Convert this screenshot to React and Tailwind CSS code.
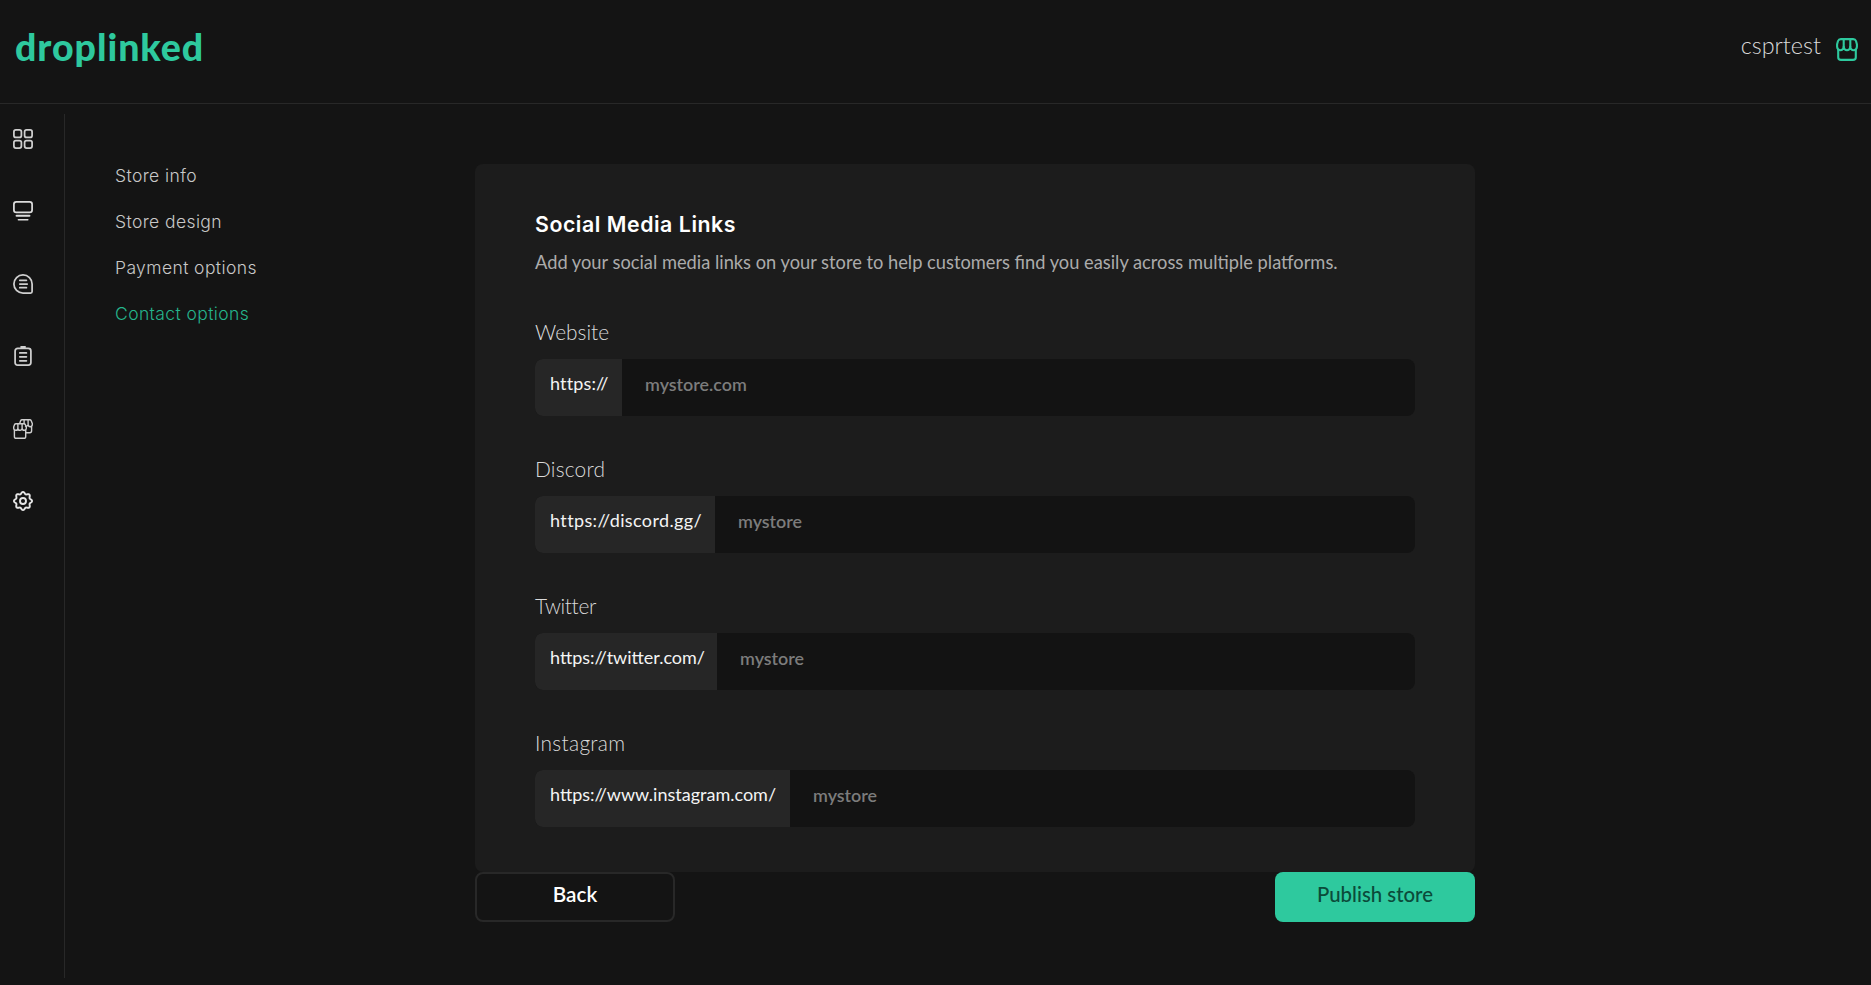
function Market({ className, strokeWidth = 2.1 }) {
  return (
    <svg viewBox="0 0 22 23" className={className} fill="none" stroke="currentColor" strokeWidth={strokeWidth} strokeLinecap="round" strokeLinejoin="round">
      <path d="M1.1 8.8V6.2L2 3Q2.7 1.1 4.8 1.1h12.4Q19.3 1.1 20 3l.9 3.2v2.6a3.3 3.4 0 0 1-6.6 0 3.3 3.4 0 0 1-6.6 0A3.3 3.4 0 0 1 1.1 8.8Z" />
      <path d="M7.7 1.1v7.7M14.3 1.1v7.7M2.2 11.6v7.6Q2.2 21.9 5 21.9h12q2.8 0 2.8-2.7v-7.6" />
    </svg>
  );
}

const gearPath =
  Array.from({ length: 97 }, (_, i) => {
    const a = (i / 96) * Math.PI * 2;
    const r = 8.1 + 0.95 * Math.cos(8 * a);
    return `${i ? 'L' : 'M'}${(10 + r * Math.sin(a)).toFixed(2)} ${(10 - r * Math.cos(a)).toFixed(2)}`;
  }).join('') + 'Z';

const iconProps = {
  viewBox: '0 0 20 20',
  className: 'h-5 w-5',
  fill: 'none',
  stroke: 'currentColor',
  strokeLinecap: 'round',
  strokeLinejoin: 'round',
};

function SideIcons() {
  return (
    <div className="flex flex-col gap-[52.4px] pl-[13px] pt-[25px] text-[#cfcfcf]">
      <svg {...iconProps} strokeWidth="1.75">
        <rect x="0.9" y="0.9" width="7.5" height="7.5" rx="2" />
        <rect x="11.6" y="0.9" width="7.5" height="7.5" rx="2" />
        <rect x="0.9" y="11.6" width="7.5" height="7.5" rx="2" />
        <rect x="11.6" y="11.6" width="7.5" height="7.5" rx="2" />
      </svg>
      <svg {...iconProps} strokeWidth="1.75" className="h-5 w-5 text-[#dcdcdc]">
        <rect x="0.9" y="0.9" width="18.2" height="10.4" rx="2.4" />
        <path d="M3.6 14.8h12.8" strokeWidth="2.1" />
        <path d="M5.4 18.7h9.4" strokeWidth="1.6" />
      </svg>
      <svg {...iconProps} strokeWidth="1.75">
        <path d="M10 0.9A9.1 9.1 0 0 1 19.1 10v7.6q0 1.5-1.5 1.5H10A9.1 9.1 0 0 1 10 0.9Z" />
        <path d="M6.8 6.3h6.6M6.8 10h7.4M6.8 13.7h6.6" />
      </svg>
      <svg {...iconProps} strokeWidth="1.75">
        <rect x="2.1" y="2.3" width="15.8" height="16.8" rx="2.6" />
        <path d="M8.2 1h3.8" strokeWidth="2" />
        <path d="M6.8 6.9h6.6M6.8 10.8h6.6M6.8 14.8h6.6" />
      </svg>
      <svg {...iconProps} strokeWidth="1.4">
        <path d="M0.7 9.2V8l.8-2.3q.4-1 1.5-1h7.9q1.1 0 1.5 1L13.3 8v1.2a2.1 2.1 0 0 1-4.2 0 2.1 2.1 0 0 1-4.2 0 2.1 2.1 0 0 1-4.2 0ZM4.9 4.7v4.5M9.1 4.7v4.5" />
        <path d="M1.4 11.2v6.2q0 1.9 1.9 1.9h7.5q1.9 0 1.9-1.9v-6.2" />
        <path d="M6.7 4.5l.9-2.8q.4-1 1.5-1h7.6q1.1 0 1.5 1l1.1 2.7v1.2a2.1 2.1 0 0 1-4.2 0 2.1 2.1 0 0 1-2.6 1.5M11.1.7v3.8M15.1.7v4.9M18.6 7.6v4.2q0 1.9-1.9 1.9h-3.5" />
      </svg>
      <svg {...iconProps} strokeWidth="1.9" className="h-5 w-5 text-[#e6e6e6]">
        <path d={gearPath} />
        <circle cx="10" cy="10" r="3" />
      </svg>
    </div>
  );
}

function Field({ label, labelClass = '', prefix, prefixClass, placeholder }) {
  return (
    <div className="flex flex-col gap-[15px]">
      <label className={`pt-px text-[20.9px] font-light leading-6 text-[#dadada] ${labelClass}`}>{label}</label>
      <div className="flex h-[57px] overflow-hidden rounded-lg bg-[#131313]">
        <div className={`flex shrink-0 items-center bg-[#262626] pb-[9px] pl-[15px] text-[18px] leading-6 text-[#f4f4f4] ${prefixClass}`}>{prefix}</div>
        <input
          className="min-w-0 flex-1 bg-transparent pb-[7px] pl-[23px] text-[17.9px] font-semibold leading-6 text-white outline-none placeholder:text-[#7c7c7c] placeholder:opacity-100"
          placeholder={placeholder}
        />
      </div>
    </div>
  );
}

export default function App() {
  return (
    <div className="flex h-screen flex-col overflow-hidden bg-[#141414] font-['Lato',sans-serif] text-white">
      <header className="flex h-[104px] shrink-0 items-start justify-between border-b border-[#282828] pl-[15px] pr-[13px]">
        <div className="pt-[25px] text-[37.5px] font-black leading-[44px] tracking-[0.95px] text-[#2ec99e]">droplinked</div>
        <div className="flex items-start gap-[15px]">
          <span className="pt-[29px] text-[23.4px] font-light leading-8 text-[#dadada]">csprtest</span>
          <Market className="mt-[38px] h-[23px] w-[22px] text-[#2ec99e]" />
        </div>
      </header>
      <div className="flex min-h-0 flex-1">
        <aside className="flex w-[65px] shrink-0 flex-col">
          <div className="mb-[7px] mt-2.5 flex-1 border-r border-[#282828]">
            <div className="-mt-2.5">
              <SideIcons />
            </div>
          </div>
        </aside>
        <nav className="flex w-[410px] shrink-0 flex-col pl-[50px] pt-[49px] font-['Inter',sans-serif] text-[17.5px] font-light leading-[46px] tracking-[0.4px] text-[#c8c8c8]">
          <a>Store info</a>
          <a>Store design</a>
          <a>Payment options</a>
          <a className="text-[#25b58c]">Contact options</a>
        </nav>
        <main className="w-[1000px] pt-[60px]">
          <section className="rounded-lg bg-[#1c1c1c] px-[60px] pb-[45px] pt-[45px]">
            <h1 className="font-['Inter',sans-serif] text-[21.3px] font-semibold leading-[30px] tracking-[0.55px]">Social Media Links</h1>
            <p className="mt-[10px] whitespace-nowrap text-[18.28px] leading-[26px] text-[#ababab]">
              Add your social media links on your store to help customers find you easily across multiple platforms.
            </p>
            <div className="mt-11 flex flex-col gap-10">
              <Field label="Website" prefix="https://" prefixClass="w-[87px] tracking-[0.15px]" placeholder="mystore.com" />
              <Field label="Discord" labelClass="tracking-[0.2px]" prefix="https://discord.gg/" prefixClass="w-[180px] tracking-[0.38px]" placeholder="mystore" />
              <Field label="Twitter" labelClass="tracking-[-0.35px]" prefix="https://twitter.com/" prefixClass="w-[182px]" placeholder="mystore" />
              <Field label="Instagram" labelClass="tracking-[0.3px]" prefix="https://www.instagram.com/" prefixClass="w-[255px]" placeholder="mystore" />
            </div>
          </section>
          <div className="flex justify-between">
            <button className="h-[50px] w-[200px] rounded-lg border-2 border-[#282828] pb-1.5 text-[20.7px] font-semibold leading-6">Back</button>
            <button className="h-[50px] w-[200px] rounded-lg bg-[#2ec99e] pb-1.5 text-[20.4px] font-medium leading-6 text-[#0b4b3a]">Publish store</button>
          </div>
        </main>
      </div>
    </div>
  );
}
